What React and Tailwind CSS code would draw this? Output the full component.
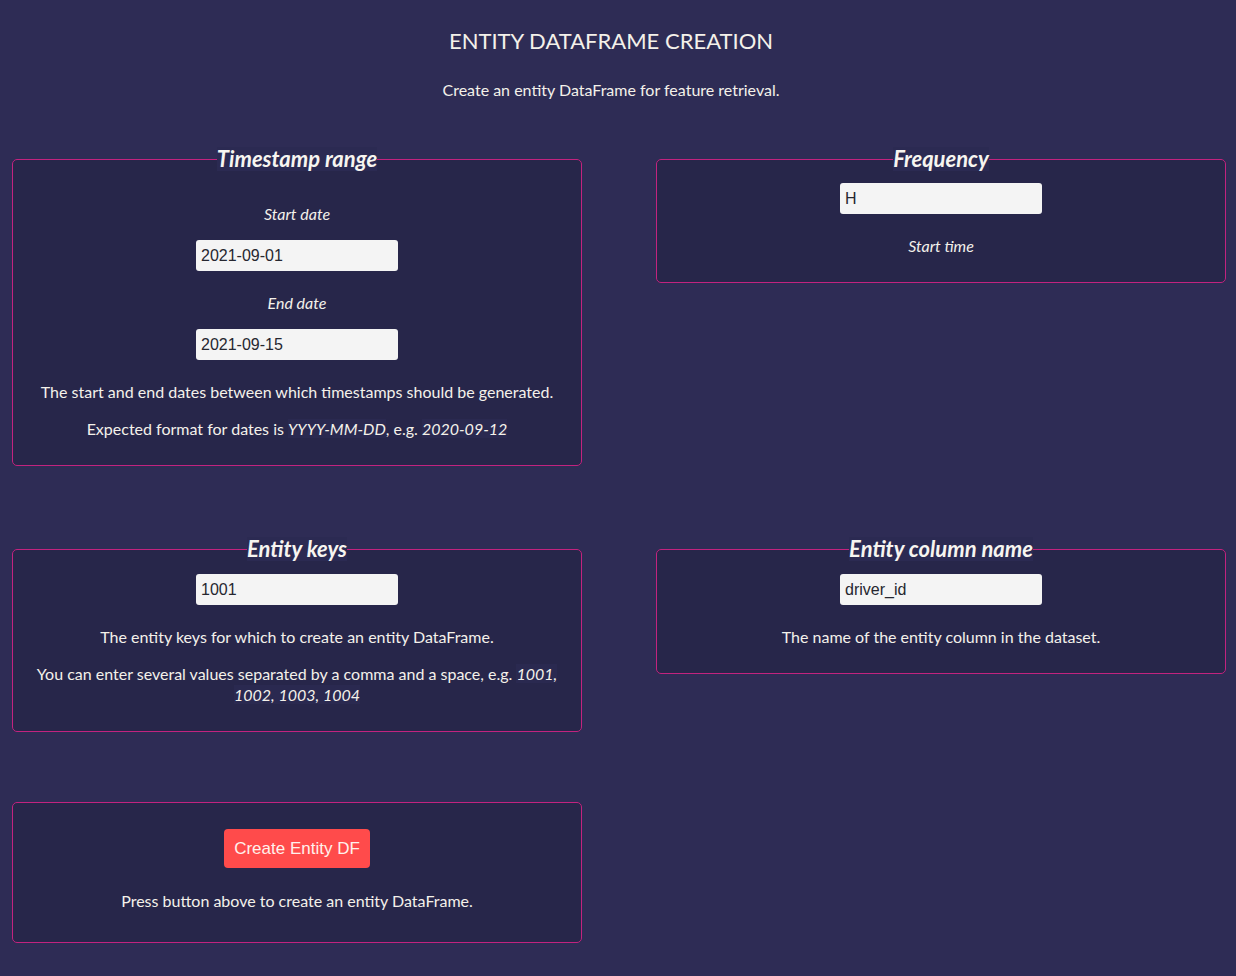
import React from 'react';

const font = { fontFamily: 'Lato, "Open Sans", sans-serif' };

const Field = ({ value }) => (
  <input
    defaultValue={value}
    className="block mx-auto w-[202px] h-[31px] rounded-[3px] bg-[#f4f4f4] px-[5px] text-[16px] text-[#262730] outline-none font-['Liberation_Sans',Arial,sans-serif]"
  />
);

const Code = ({ children }) => (
  <em className="bg-[#2a2950]">{children}</em>
);

const Card = ({ legend, children, className = '' }) => (
  <fieldset className={`border border-[#c2237f] rounded-[5px] bg-[#27264a] px-5 ${className}`}>
    {legend && (
      <legend className="mx-auto px-0 bg-[#2b2a52] text-[22px] leading-[24px] font-bold italic text-[#f7f5f0]">
        {legend}
      </legend>
    )}
    {children}
  </fieldset>
);

export default function App() {
  return (
    <div className="min-h-screen bg-[#2e2c55] text-[#f4f1ea] text-[16px] leading-[21px] pb-[34px]" style={font}>
      <div className="text-center pt-[27px] pr-[14px]">
        <h1 className="text-[22px] leading-[28px] font-normal">ENTITY DATAFRAME CREATION</h1>
        <p className="mt-[24px]">Create an entity DataFrame for feature retrieval.</p>
      </div>

      <div className="grid grid-cols-[570px_570px] gap-x-[74px] px-3 mt-[47px] items-start">
        <Card legend="Timestamp range" className="pb-[26px] text-center">
          <p className="italic mt-[32px]">Start date</p>
          <div className="mt-[16px]"><Field value="2021-09-01" /></div>
          <p className="italic mt-[21px]">End date</p>
          <div className="mt-[16px]"><Field value="2021-09-15" /></div>
          <p className="mt-[21px]">The start and end dates between which timestamps should be generated.</p>
          <p className="mt-[16px]">Expected format for dates is <Code>YYYY-MM-DD</Code>, e.g. <Code>2020-09-12</Code></p>
        </Card>

        <Card legend="Frequency" className="pb-[26px] text-center">
          <div className="mt-[12px]"><Field value="H" /></div>
          <p className="italic mt-[21px]">Start time</p>
        </Card>

        <Card legend="Entity keys" className="pb-[26px] text-center mt-[71px]">
          <div className="mt-[13px]"><Field value="1001" /></div>
          <p className="mt-[21px]">The entity keys for which to create an entity DataFrame.</p>
          <p className="mt-[16px]">You can enter several values separated by a comma and a space, e.g. <Code>1001, 1002, 1003, 1004</Code></p>
        </Card>

        <Card legend="Entity column name" className="pb-[26px] text-center mt-[71px]">
          <div className="mt-[13px]"><Field value="driver_id" /></div>
          <p className="mt-[21px]">The name of the entity column in the dataset.</p>
        </Card>

        <Card className="pb-[31px] text-center mt-[70px]">
          <button className="mt-[26px] w-[146px] h-[39px] rounded-[4px] bg-[#ff4b4b] text-[#fff1ec] text-[17px] font-['Liberation_Sans',Arial,sans-serif]">
            Create Entity DF
          </button>
          <p className="mt-[22px]">Press button above to create an entity DataFrame.</p>
        </Card>
      </div>
    </div>
  );
}
